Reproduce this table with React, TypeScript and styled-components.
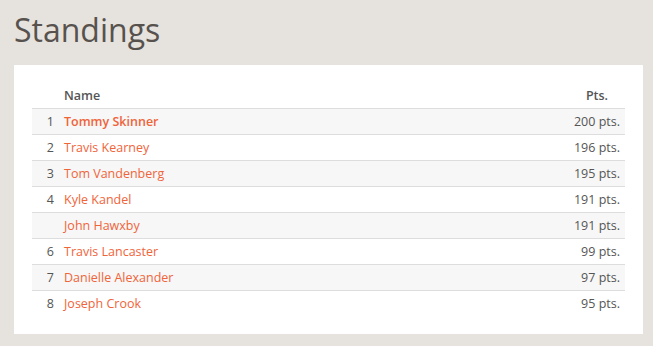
import React from "react";
import styled, { createGlobalStyle } from "styled-components";

interface Standing {
  rank?: number;
  name: string;
  points: number;
}

const standings: Standing[] = [
  { rank: 1, name: "Tommy Skinner", points: 200 },
  { rank: 2, name: "Travis Kearney", points: 196 },
  { rank: 3, name: "Tom Vandenberg", points: 195 },
  { rank: 4, name: "Kyle Kandel", points: 191 },
  { name: "John Hawxby", points: 191 },
  { rank: 6, name: "Travis Lancaster", points: 99 },
  { rank: 7, name: "Danielle Alexander", points: 97 },
  { rank: 8, name: "Joseph Crook", points: 95 },
];

const GlobalStyle = createGlobalStyle`
  html, body {
    margin: 0;
    background: #e6e2dd;
    font-family: "Open Sans", "Liberation Sans", sans-serif;
    color: #555;
  }
`;

const Page = styled.div`
  padding: 10px 14px 12px 14px;
`;

const Title = styled.h1`
  margin: 0 0 15px 0;
  font-size: 32px;
  line-height: 40px;
  font-weight: 400;
  color: #57524e;
`;

const Panel = styled.section`
  background: #fff;
  width: 629px;
  box-sizing: border-box;
  padding: 18px;
`;

const Table = styled.table`
  width: 100%;
  border-collapse: collapse;
  font-size: 12.5px;
`;

const HeadCell = styled.th<{ align?: "left" | "center" }>`
  text-align: ${(p) => p.align || "left"};
  font-weight: 600;
  color: #555;
  height: 25px;
  padding: 0 5px;
  border-bottom: 1px solid #ddd;
`;

const Row = styled.tr<{ striped?: boolean }>`
  background: ${(p) => (p.striped ? "#f7f7f7" : "#fff")};
`;

const Cell = styled.td<{ align?: "left" | "right"; width?: number; fit?: boolean }>`
  height: 25px;
  padding: 0 5px;
  border-top: 1px solid #ddd;
  text-align: ${(p) => p.align || "left"};
  width: ${(p) => (p.width ? `${p.width}px` : p.fit ? "1%" : "auto")};
  white-space: nowrap;
  color: #555;
`;

const PlayerLink = styled.a<{ leader?: boolean }>`
  color: #f0643a;
  text-decoration: none;
  font-weight: ${(p) => (p.leader ? 600 : 400)};
`;

export default function App() {
  return (
    <Page>
      <GlobalStyle />
      <Title>Standings</Title>
      <Panel>
        <Table>
          <thead>
            <tr>
              <HeadCell />
              <HeadCell>Name</HeadCell>
              <HeadCell align="center">Pts.</HeadCell>
            </tr>
          </thead>
          <tbody>
            {standings.map((s, i) => (
              <Row key={s.name} striped={i % 2 === 0}>
                <Cell align="right" width={17}>
                  {s.rank ?? ""}
                </Cell>
                <Cell>
                  <PlayerLink href="#" leader={i === 0}>
                    {s.name}
                  </PlayerLink>
                </Cell>
                <Cell align="right" fit>
                  {s.points} pts.
                </Cell>
              </Row>
            ))}
          </tbody>
        </Table>
      </Panel>
    </Page>
  );
}
